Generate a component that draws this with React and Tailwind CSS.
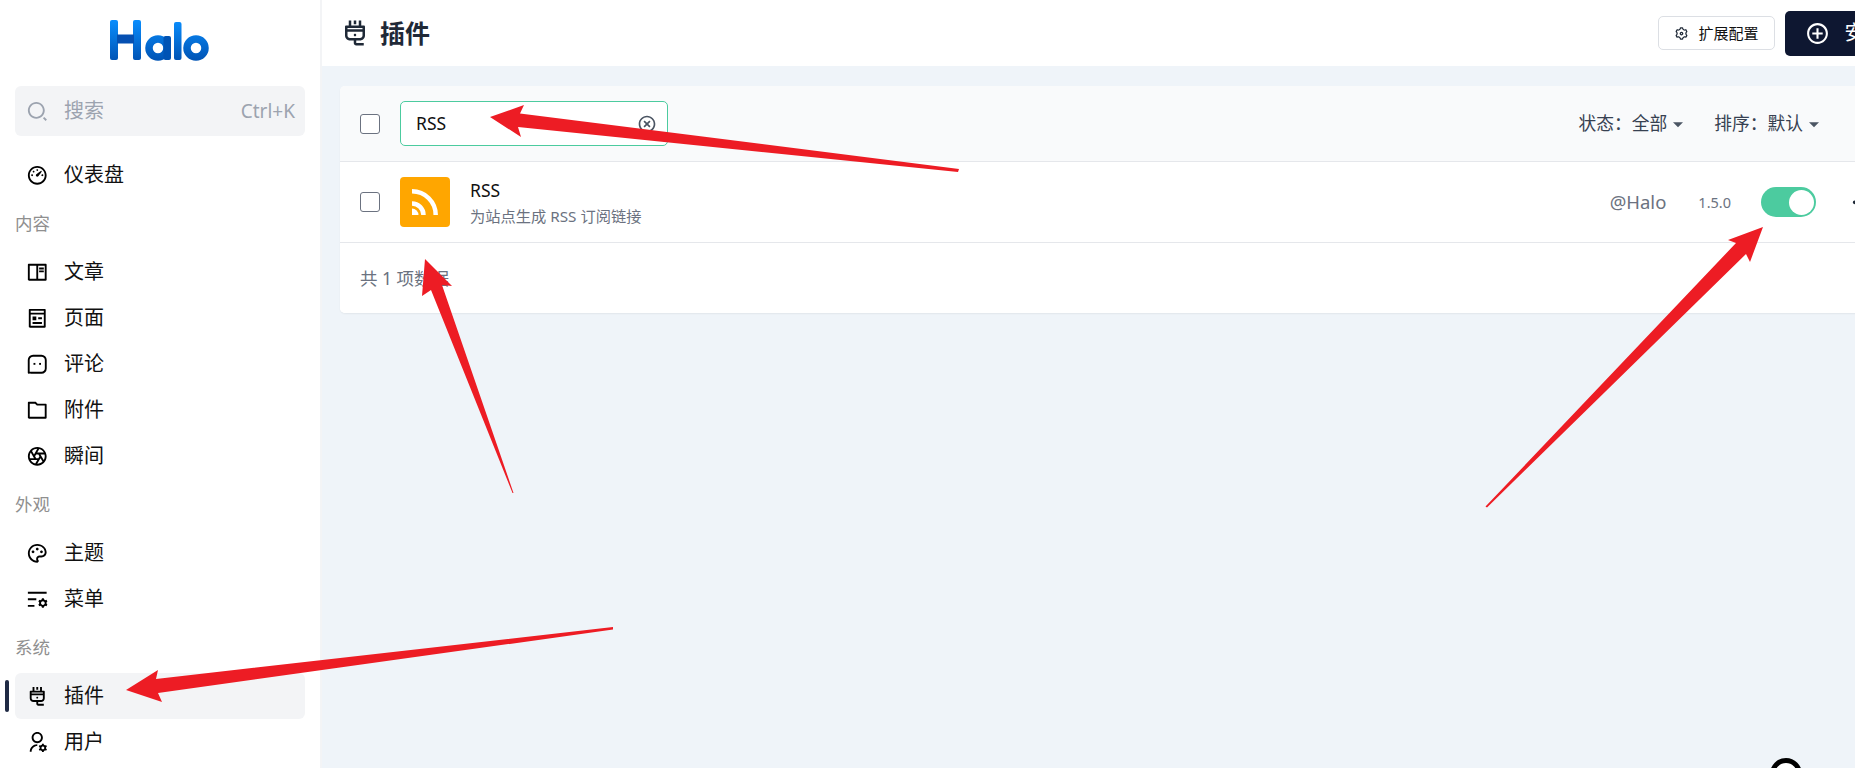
import React from "react";
import {
  RiDashboard3Line, RiBookReadLine, RiPagesLine, RiFolderLine, RiCameraLensLine,
  RiPaletteLine, RiListSettingsLine, RiPlug2Line, RiUserSettingsLine, RiSettings3Line,
  RiAddCircleLine, RiCloseCircleLine, RiSearch2Line, RiArrowDownSFill, RiMore2Fill,
} from "react-icons/ri";

function CommentIcon({ className }) {
  return (
    <svg viewBox="0 0 24 24" className={className} fill="none">
      <path d="M2.9 21.1V7.5A4.6 4.6 0 0 1 7.5 2.9h9a4.6 4.6 0 0 1 4.6 4.6v9a4.6 4.6 0 0 1-4.6 4.6H7.5c-2 0-3.4-.3-4.6 0Z" stroke="currentColor" strokeWidth="2" strokeLinejoin="round" />
      <rect x="8" y="10.6" width="2" height="2" fill="currentColor" />
      <rect x="14" y="10.6" width="2" height="2" fill="currentColor" />
    </svg>
  );
}

function NavItem({ icon: Icon, label, active }) {
  return (
    <div className={`relative flex h-[46px] items-center rounded-[6px] pl-[10.5px] text-[20px] leading-none text-[#111] ${active ? "bg-[#f3f4f6]" : ""}`}>
      {active && <span className="absolute left-[-10px] top-[7px] h-[32px] w-[4px] rounded-full bg-[#1f2a44]" />}
      <Icon className="h-[22.5px] w-[22.5px] shrink-0 text-black" />
      <span className="ml-[16px]">{label}</span>
    </div>
  );
}

function GroupTitle({ children, className }) {
  return <div className={`flex h-[26px] items-center text-[17.5px] leading-none text-[#8f8f8f] ${className}`}>{children}</div>;
}

function Logo() {
  return (
    <svg viewBox="0 0 100 42" className="h-[42px] w-[100px]" fill="none">
      <defs>
        <linearGradient id="halo" x1="0" y1="0" x2="0" y2="42" gradientUnits="userSpaceOnUse">
          <stop offset="0" stopColor="#0a8fff" />
          <stop offset="1" stopColor="#0053b4" />
        </linearGradient>
      </defs>
      <rect x="1" y="1" width="8" height="40" rx="2" fill="url(#halo)" />
      <rect x="24" y="1" width="8" height="40" rx="2" fill="url(#halo)" />
      <rect x="8" y="15.5" width="17" height="9" fill="#0550b2" />
      <circle cx="49" cy="29" r="9" stroke="url(#halo)" strokeWidth="7.5" />
      <rect x="54.5" y="17" width="7.5" height="24" rx="2" fill="#0053b4" />
      <rect x="65" y="3" width="7.5" height="38" rx="2" fill="url(#halo)" />
      <circle cx="87" cy="29" r="9" stroke="url(#halo)" strokeWidth="7.5" />
    </svg>
  );
}

function Sidebar() {
  return (
    <aside className="h-full w-[322px] shrink-0 overflow-hidden border-r-2 border-[#f3f4f6] bg-white">
      <div className="flex h-[86px] justify-center pr-[2px] pt-[19px]">
        <Logo />
      </div>
      <div className="mx-[15px] flex h-[50px] items-center rounded-[6px] bg-[#f3f4f6] pl-[10.5px] pr-[10px] text-[#9ca3af]">
        <RiSearch2Line className="h-[22.5px] w-[22.5px] shrink-0" />
        <span className="ml-[16px] text-[20px] leading-none">搜索</span>
        <span className="ml-auto text-[19px] leading-none">Ctrl+K</span>
      </div>
      <nav className="mx-[15px] mt-[16px]">
        <NavItem icon={RiDashboard3Line} label="仪表盘" />
        <GroupTitle className="mt-[13px] mb-[12px]">内容</GroupTitle>
        <NavItem icon={RiBookReadLine} label="文章" />
        <NavItem icon={RiPagesLine} label="页面" />
        <NavItem icon={CommentIcon} label="评论" />
        <NavItem icon={RiFolderLine} label="附件" />
        <NavItem icon={RiCameraLensLine} label="瞬间" />
        <GroupTitle className="mt-[13px] mb-[12px]">外观</GroupTitle>
        <NavItem icon={RiPaletteLine} label="主题" />
        <NavItem icon={RiListSettingsLine} label="菜单" />
        <GroupTitle className="mt-[13px] mb-[12px]">系统</GroupTitle>
        <NavItem icon={RiPlug2Line} label="插件" active />
        <NavItem icon={RiUserSettingsLine} label="用户" />
      </nav>
    </aside>
  );
}

function Checkbox() {
  return <span className="block h-[20px] w-[20px] shrink-0 rounded-[3px] border border-[#6b7280] bg-white" />;
}

function Filter({ label, className }) {
  return (
    <div className={`flex items-center text-[17.75px] leading-none text-[#374151] ${className}`}>
      <span>{label}</span>
      <RiArrowDownSFill className="ml-[1px] h-[20px] w-[20px] text-[#4b5563]" />
    </div>
  );
}

function Main() {
  return (
    <main className="h-full min-w-0 flex-1 overflow-hidden bg-[#eff4f9]">
      <div className="w-[1608px]">
        <header className="flex h-[66px] items-center bg-white pl-[18px] pr-[25px]">
          <RiPlug2Line className="h-[30px] w-[30px] text-[#1f2937]" />
          <h1 className="ml-[10px] text-[25px] font-bold leading-none text-[#1f2937]">插件</h1>
          <div className="ml-auto flex items-center gap-[10px]">
            <button className="flex h-[34px] w-[117px] items-center justify-center rounded-[5px] border border-[#dcdfe4] bg-white text-[15px] leading-none text-[#111]">
              <RiSettings3Line className="mr-[9px] h-[15px] w-[15px] text-[#1f2937]" />
              扩展配置
            </button>
            <button className="flex h-[45px] w-[120px] items-center rounded-[5px] bg-[#0e1731] pl-[19.5px] text-[20px] leading-none text-white">
              <RiAddCircleLine className="mr-[15px] h-[25px] w-[25px]" />
              安装
            </button>
          </div>
        </header>
        <section className="mx-[18px] mt-[20px] overflow-hidden rounded-[5px] bg-white shadow-[0_1px_2px_rgba(0,0,0,0.06)]">
          <div className="flex h-[76px] items-center border-b border-[#e5e7eb] bg-[#f9fafb] pl-[20px] pr-[88px]">
            <Checkbox />
            <div className="ml-[20px] flex h-[45px] w-[268px] items-center rounded-[5px] border border-[#4ccb9f] bg-white pl-[15px] pr-[10px] text-[17.5px] leading-none text-[#111]">
              <span>RSS</span>
              <RiCloseCircleLine className="ml-auto h-[20px] w-[20px] text-[#4b5563]" />
            </div>
            <Filter label="状态：全部" className="ml-auto" />
            <Filter label="排序：默认" className="ml-[26px]" />
          </div>
          <div className="flex h-[81px] items-center border-b border-[#e5e7eb] bg-white pl-[20px] pr-[39.5px]">
            <Checkbox />
            <div className="ml-[20px] flex h-[50px] w-[50px] shrink-0 items-center justify-center rounded-[4px] bg-[#ffa600]">
              <svg viewBox="0 0 26 26" className="h-[26px] w-[26px]" fill="none">
                <path d="M0 14.5A11.5 11.5 0 0 1 11.5 26" stroke="#fff" strokeWidth="4.5" />
                <path d="M0 2.3A23.7 23.7 0 0 1 23.7 26" stroke="#fff" strokeWidth="4.5" />
                <path d="M0 19.5A6.5 6.5 0 0 1 6.5 26H0Z" fill="#fff" />
              </svg>
            </div>
            <div className="ml-[20px] flex flex-col">
              <span className="text-[17.5px] leading-[24px] text-[#111]">RSS</span>
              <span className="mt-[4px] text-[15.25px] leading-[20px] text-[#6b7280]">为站点生成 RSS 订阅链接</span>
            </div>
            <span className="ml-auto text-[18.5px] leading-none text-[#6b7280]">@Halo</span>
            <span className="ml-[32px] text-[14.5px] leading-none text-[#6b7280]">1.5.0</span>
            <div className="ml-[30px] flex h-[30px] w-[55px] items-center justify-end rounded-full bg-[#4ccb9f] pr-[2.5px]">
              <span className="block h-[25px] w-[25px] rounded-full bg-white" />
            </div>
            <RiMore2Fill className="ml-[34px] h-[22.5px] w-[22.5px] rotate-90 text-[#1f2937]" />
          </div>
          <div className="flex h-[70px] items-center bg-white pl-[20px] pt-[2px] text-[17.5px] leading-none text-[#6b7280]">
            共 1 项数据
          </div>
        </section>
      </div>
    </main>
  );
}

function Arrows() {
  return (
    <svg viewBox="0 0 1855 768" className="pointer-events-none absolute left-0 top-0 h-[768px] w-[1855px]" fill="#ed1c24">
      <polygon points="490,117 524,105 520,113.5 959,169 958,172 518,127 521,137" />
      <polygon points="425,259 452,286 442,285 513.5,493 512.5,493 431,290 422,296" />
      <polygon points="1763,227 1750,262 1746,254 1487,507.5 1485.5,506.5 1736,243 1728,240" />
      <polygon points="126,690 158,670 156,679 613,627 613,629.5 158,693 162,702" />
    </svg>
  );
}

export default function App() {
  return (
    <div
      className="relative flex h-[768px] w-[1855px] overflow-hidden"
      style={{ fontFamily: '"Noto Sans", "Noto Sans CJK SC", sans-serif' }}
    >
      <Sidebar />
      <Main />
      <Arrows />
      <span className="absolute left-[1770px] top-[758px] h-[32px] w-[32px] rounded-full border-[5px] border-black bg-white" />
    </div>
  );
}
